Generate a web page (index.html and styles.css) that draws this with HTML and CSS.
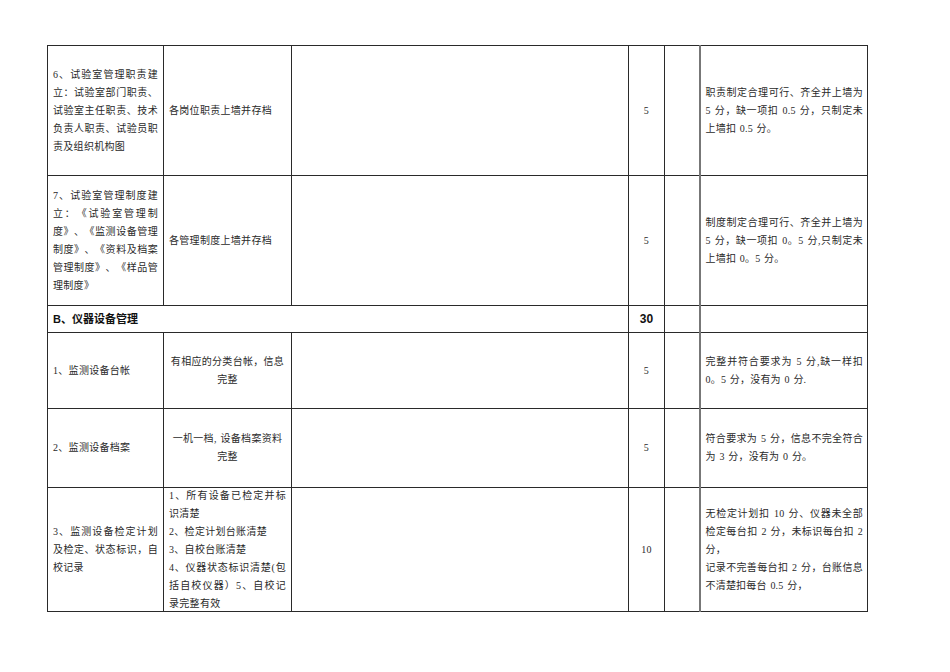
FILE: index.html
```html
<!DOCTYPE html>
<html lang="zh-CN">
<head>
<meta charset="utf-8">
<link rel="stylesheet" href="styles.css">
</head>
<body>
<div class="page">
<table class="sheet">
  <colgroup>
    <col class="c1"><col class="c2"><col class="c3"><col class="c4"><col class="c5"><col class="c6">
  </colgroup>
  <tr class="r-tall">
    <td class="item">6、试验室管理职责建立：试验室部门职责、试验室主任职责、技术负责人职责、试验员职责及组织机构图</td>
    <td class="std">各岗位职责上墙并存档</td>
    <td></td>
    <td class="score">5</td>
    <td></td>
    <td class="rule">职责制定合理可行、齐全并上墙为 5 分，缺一项扣 0.5 分，只制定未上墙扣 0.5 分。</td>
  </tr>
  <tr class="r-tall">
    <td class="item">7、试验室管理制度建立：《试验室管理制度》、《监测设备管理制度》、《资料及档案管理制度》、《样品管理制度》</td>
    <td class="std">各管理制度上墙并存档</td>
    <td></td>
    <td class="score">5</td>
    <td></td>
    <td class="rule">制度制定合理可行、齐全并上墙为 5 分，缺一项扣 0。5 分,只制定未上墙扣 0。5 分。</td>
  </tr>
  <tr class="r-head">
    <td class="section" colspan="3">B、仪器设备管理</td>
    <td class="section total">30</td>
    <td></td>
    <td class="rule"></td>
  </tr>
  <tr class="r-mid">
    <td class="item">1、监测设备台帐</td>
    <td class="std center">有相应的分类台帐，信息完整</td>
    <td></td>
    <td class="score">5</td>
    <td></td>
    <td class="rule">完整并符合要求为 5 分,缺一样扣 0。5 分，没有为 0 分.</td>
  </tr>
  <tr class="r-mid2">
    <td class="item">2、监测设备档案</td>
    <td class="std center">一机一档, 设备档案资料完整</td>
    <td></td>
    <td class="score">5</td>
    <td></td>
    <td class="rule">符合要求为 5 分，信息不完全符合为 3 分，没有为 0 分。</td>
  </tr>
  <tr class="r-last">
    <td class="item">3、监测设备检定计划及检定、状态标识，自校记录</td>
    <td class="std"><div class="tight">1、所有设备已检定并标识清楚<br>2、检定计划台账清楚<br>3、自校台账清楚<br>4、仪器状态标识清楚(包括自校仪器）5、自校记录完整有效</div></td>
    <td></td>
    <td class="score">10</td>
    <td></td>
    <td class="rule">无检定计划扣 10 分、仪器未全部检定每台扣 2 分，未标识每台扣 2 分，<br>记录不完善每台扣 2 分，台账信息不清楚扣每台 0.5 分，</td>
  </tr>
</table>
</div>
</body>
</html>
```
FILE: styles.css
```css
html, body {
  margin: 0;
  padding: 0;
  background: #ffffff;
}
.page {
  padding: 45px 0 0 47px;
}
.sheet {
  border-collapse: collapse;
  table-layout: fixed;
  width: 820px;
  font-family: "Liberation Serif", "Noto Sans CJK SC", serif;
  font-size: 10px;
  line-height: 18px;
  letter-spacing: 0.3px;
  word-spacing: 1px;
  text-spacing-trim: space-all;
  color: #2a2a2a;
}
.c1 { width: 116px; }
.c2 { width: 128px; }
.c3 { width: 337px; }
.c4 { width: 36px; }
.c5 { width: 35px; }
.c6 { width: 168px; }
.sheet td {
  border: 1px solid #2a2a2a;
  padding: 0 5px;
  vertical-align: middle;
  text-align: justify;
  line-break: strict;
}
.sheet td.rule {
  border-left: 2px solid #777;
  padding: 0 4px 0 5px;
  letter-spacing: 0.2px;
}
.tight {
  margin: -2px 0;
}
.r-tall { height: 130px; }
.r-head { height: 27px; }
.r-mid { height: 76px; }
.r-mid2 { height: 79px; }
.r-last { height: 124px; }
.center {
  text-align: center !important;
}
.score {
  text-align: center !important;
}
.section {
  font-family: "Liberation Sans", "Noto Sans CJK SC", sans-serif;
  font-weight: bold;
  font-size: 11px;
  letter-spacing: 0;
  word-spacing: 0;
  color: #111;
}
.total {
  text-align: center !important;
  font-size: 12px;
}
```
